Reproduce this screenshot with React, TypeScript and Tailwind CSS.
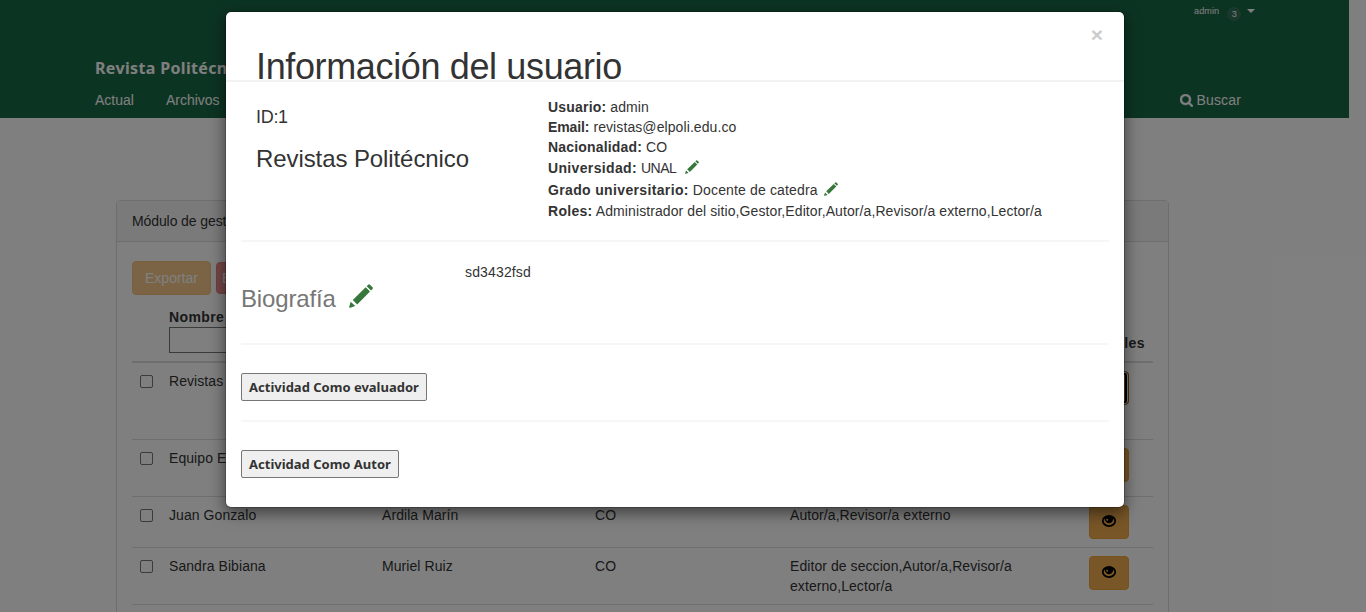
import React from 'react';

function Pencil({ className }: { className: string }) {
  return (
    <svg viewBox="0 0 24 24" className={className} fill="#37773b" aria-hidden="true">
      <path d="M19.200.7Q20.100-.2 21 .7L23.500 3.200Q24.300 4 23.500 4.900L22 6.500 17.700 2.200ZM16.700 3.300 21 7.500 8.200 20.400 3.800 16ZM1.700 17.800 6.200 22.100 1.300 23.700Q-.1 24 .2 22.700Z" />
    </svg>
  );
}

function Eye() {
  return (
    <svg viewBox="0 0 14 12" className="-mt-0.5 h-3 w-3.5" aria-hidden="true">
      <path d="M7 .9C3.500.9.800 3.500.800 6S3.500 11.100 7 11.100 13.200 8.500 13.200 6 10.500.9 7 .9Z" fill="none" stroke="#000" strokeWidth="1.700" />
      <path d="M4.100 1.300A4 4 0 1 0 9.900 1.300Z" fill="#000" />
      <path d="M4.400 3.400 6.200 4.200 5.700 5.900 4.200 5.300Z" fill="#f0ad4e" />
    </svg>
  );
}

const users = [
  { name: 'Revistas', last: '', roles: '', height: 'h-[77px]', focused: true },
  { name: 'Equipo E', last: '', roles: '', height: 'h-[57px]' },
  { name: 'Juan Gonzalo', last: 'Ardila Marín', roles: 'Autor/a,Revisor/a externo', height: 'h-[51px]' },
  { name: 'Sandra Bibiana', last: 'Muriel Ruiz', roles: 'Editor de seccion,Autor/a,Revisor/a externo,Lector/a', height: 'h-[57px]' },
];

function PageHeader() {
  return (
    <header className="flex h-[118px] w-[1349px] justify-between bg-[#196846] pl-[95px] pr-[94px] text-white">
      <div className="pt-[57px]">
        <div className="h-[22px] font-['Noto_Sans'] text-base leading-[22px] font-bold tracking-[0.350px] whitespace-nowrap">Revista Politécnica</div>
        <nav className="mt-[11px] flex gap-8">
          <span>Actual</span>
          <span>Archivos</span>
        </nav>
      </div>
      <div className="flex flex-col items-end">
        <div className="flex h-[90px] w-[61px] items-start text-[9.100px] leading-[12px]">
          <span className="pt-[5px] tracking-[0.100px]">admin</span>
          <span className="mt-[7px] ml-[8px] flex h-3.5 w-3.5 shrink-0 items-center justify-center rounded-full bg-[#317257]">3</span>
          <span className="mt-[9px] ml-[6px] h-0 w-0 border-x-4 border-t-4 border-x-transparent border-t-white" />
        </div>
        <div className="mr-[14px] flex items-start gap-1 tracking-[0.15px]">
          <svg viewBox="64 128 1664 1664" className="mt-1 h-[13px] w-[13px]" fill="#fff" stroke="#fff" strokeWidth="50" aria-hidden="true">
            <path d="M1216 832q0-185-131.5-316.5t-316.5-131.5-316.5 131.5-131.5 316.5 131.5 316.5 316.5 131.5 316.5-131.5 131.5-316.5zm512 832q0 52-38 90t-90 38q-54 0-90-38l-343-342q-179 124-399 124-143 0-273.5-55.5t-225-150-150-225-55.5-273.5 55.5-273.5 150-225 225-150 273.5-55.5 273.5 55.5 225 150 150 225 55.5 273.5q0 220-124 399l343 343q37 37 37 90z" />
          </svg>
          <span>Buscar</span>
        </div>
      </div>
    </header>
  );
}

function UsersPanel() {
  return (
    <section className="mt-[82px] ml-[116px] h-[500px] w-[1053px] rounded-t border border-[#ddd]">
      <div className="h-[41px] border-b border-[#ddd] bg-[#f5f5f5] pt-2.5 pl-[15px] tracking-[-0.100px]">Módulo de gestión</div>
      <div className="px-[15px] pt-[19px]">
        <div className="flex items-center gap-[5px] text-white">
          <button className="h-[34px] w-[79px] rounded border border-[#eea236] bg-[#f0ad4e] opacity-65">Exportar</button>
          <button className="h-8 w-[70px] rounded border border-[#d43f3a] bg-[#d9534f] pl-[5px] text-left opacity-65">Eliminar</button>
        </div>
        <div className="flex h-[68px] justify-between border-b-2 border-[#ddd] pt-3 pl-[37px] font-bold">
          <label className="flex flex-col tracking-[0.400px]">
            Nombre
            <span className="h-[26px] w-[170px] border border-[#767676]" />
          </label>
          <span className="pt-[26px] pr-2 tracking-[0.400px]">Detalles</span>
        </div>
        {users.map((u) => (
          <div key={u.name} className={`grid grid-cols-[37px_213px_213px_195px_299px_64px] border-b border-[#ddd] pt-2 tracking-[0.070px] ${u.height}`}>
            <span className="mt-1 ml-2 h-[13px] w-[13px] rounded-[2px] border border-[#767676]" />
            <span>{u.name}</span>
            <span>{u.last}</span>
            <span>CO</span>
            <span className="w-[240px]">{u.roles}</span>
            <button className={`flex h-[34px] w-10 items-center justify-center rounded border ${u.focused ? 'border-[#985f0d] bg-[#ec971f] shadow-[inset_0_0_0_1px_#fff,inset_0_0_0_3px_#000]' : 'border-[#eea236] bg-[#f0ad4e]'}`}>
              <Eye />
            </button>
          </div>
        ))}
      </div>
    </section>
  );
}

function Modal() {
  return (
    <div className="h-[497px] w-[900px] rounded-[6px] border border-black/20 bg-white bg-clip-padding shadow-[0_5px_15px_rgba(0,0,0,0.5)]">
      <div className="flex h-[70px] items-start justify-between border-b-2 border-[#f2f2f2] pl-[30px]">
        <h1 className="mt-[35px] text-[36px] leading-10 tracking-[-0.360px]">Información del usuario</h1>
        <button className="mt-[11px] mr-[21px] text-[21px] leading-6 font-bold text-[#ccc]">×</button>
      </div>
      <div className="px-[15px] pt-[15px]">
        <div className="flex h-[145px] border-b-2 border-[#f6f6f6] pl-[15px]">
          <div className="w-[292px] pt-2.5">
            <h4 className="text-lg leading-5 tracking-[-0.300px]">ID:1</h4>
            <h3 className="mt-[19px] text-2xl leading-[26px] tracking-[-0.090px]">Revistas Politécnico</h3>
          </div>
          <div className="tracking-[0.090px]">
            <div className="h-5"><b className="tracking-[0.200px]">Usuario:</b> admin</div>
            <div className="h-5"><b className="tracking-[-0.100px]">Email:</b> revistas@elpoli.edu.co</div>
            <div className="h-5"><b className="tracking-[0.170px]">Nacionalidad:</b> CO</div>
            <div className="flex h-[22px] pt-px"><span><b className="tracking-[0.350px]">Universidad:</b> <span className="tracking-[-0.500px]">UNAL</span></span><Pencil className="mt-0.5 ml-[9px] h-3.5 w-3.5" /></div>
            <div className="flex h-[22px] pt-px"><span><b className="tracking-[0.350px]">Grado universitario:</b> <span className="tracking-[0.150px]">Docente de catedra</span></span><Pencil className="mt-0.5 ml-1.5 h-3.5 w-3.5" /></div>
            <div className="h-5"><b className="tracking-[0.300px]">Roles:</b> Administrador del sitio,Gestor,Editor,Autor/a,Revisor/a externo,Lector/a</div>
          </div>
        </div>
        <div className="flex h-[103px] border-b-2 border-[#f6f6f6] pt-5">
          <div className="flex w-[224px] pt-6 text-[#777]">
            <h3 className="text-2xl leading-[26px] tracking-[-0.150px]">Biografía</h3>
            <Pencil className="-mt-[2px] ml-[13px] h-6 w-6" />
          </div>
          <span className="tracking-[0.150px]">sd3432fsd</span>
        </div>
        <div className="h-[77px] border-b-2 border-[#f6f6f6] pt-7">
          <button className="h-7 w-[186px] rounded-[2px] border border-[#767676] bg-[#efefef] font-['Noto_Sans'] text-[13px] font-bold whitespace-nowrap">Actividad Como evaluador</button>
        </div>
        <div className="pt-7">
          <button className="h-7 w-[158px] rounded-[2px] border border-[#767676] bg-[#efefef] font-['Noto_Sans'] text-[13px] font-bold whitespace-nowrap">Actividad Como Autor</button>
        </div>
      </div>
    </div>
  );
}

export default function App() {
  return (
    <div className="relative h-[612px] w-[1366px] overflow-hidden bg-white font-['Liberation_Sans',sans-serif] text-sm leading-5 text-[#333]">
      <PageHeader />
      <UsersPanel />
      <div className="absolute inset-0 bg-black/50 pt-[11px] pl-[225px]">
        <Modal />
      </div>
    </div>
  );
}
